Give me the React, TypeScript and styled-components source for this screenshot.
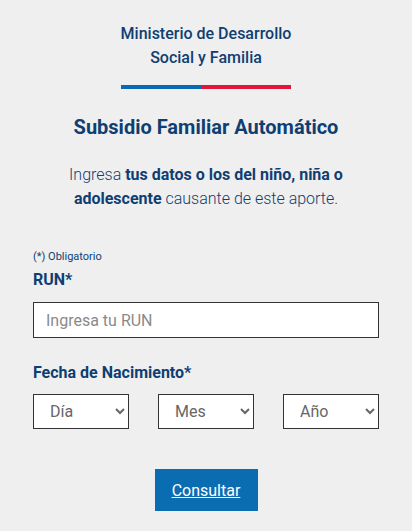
import React from "react";
import styled, {createGlobalStyle} from "styled-components";

const navy = "#0f3e72";

const GlobalStyle = createGlobalStyle`
  html, body {
    margin: 0;
    padding: 0;
    background: #efefef;
    font-family: Roboto, "Liberation Sans", sans-serif;
  }
`;

const Page = styled.div`
  display: flex;
  flex-direction: column;
  align-items: center;
  padding: 22px 33px 20px;
`;

const Ministry = styled.div`
  color: ${navy};
  font-size: 16px;
  font-weight: 500;
  line-height: 24px;
  text-align: center;
`;

const FlagBar = styled.div`
  display: flex;
  width: 170px;
  height: 4px;
  margin-top: 15px;
`;

const Stripe = styled.div<{color: string; size: number}>`
  width: ${p => p.size}px;
  background: ${p => p.color};
`;

const Title = styled.h1`
  margin: 25px 0 0;
  color: ${navy};
  font-size: 20px;
  font-weight: 700;
  line-height: 26px;
  text-align: center;
`;

const Intro = styled.p`
  margin: 23px 0 0;
  color: ${navy};
  font-size: 16px;
  font-weight: 300;
  line-height: 24px;
  text-align: center;

  strong {
    font-weight: 700;
  }
`;

const Form = styled.form`
  align-self: stretch;
  display: flex;
  flex-direction: column;
  margin-top: 39px;
`;

const Note = styled.div`
  color: ${navy};
  font-size: 11px;
  line-height: 14px;
`;

const Label = styled.label<{top: number}>`
  margin-top: ${p => p.top}px;
  color: ${navy};
  font-size: 16px;
  font-weight: 700;
  line-height: 22px;
`;

const TextInput = styled.input`
  box-sizing: border-box;
  height: 36px;
  margin-top: 11px;
  padding: 0 12px;
  border: 1px solid #333;
  border-radius: 0;
  background: #fff;
  font-family: inherit;
  font-size: 16px;
  color: #333;
  outline: none;

  &::placeholder {
    color: #8a8a8a;
  }
`;

const SelectRow = styled.div`
  display: grid;
  grid-template-columns: repeat(3, 96px);
  justify-content: space-between;
  margin-top: 10px;
`;

const Select = styled.select`
  box-sizing: border-box;
  height: 35px;
  padding: 0 8px 0 12px;
  border: 1px solid #333;
  border-radius: 0;
  background: #fff;
  font-family: inherit;
  font-size: 16px;
  color: #666;
  outline: none;
`;

const ButtonRow = styled.div`
  display: flex;
  justify-content: center;
  margin-top: 40px;
`;

const Button = styled.button`
  width: 103px;
  height: 42px;
  border: none;
  border-radius: 0;
  background: #0a6db1;
  color: #fff;
  font-family: inherit;
  font-size: 16px;
  text-decoration: underline;
  cursor: pointer;
`;

export default function App() {
    return (
        <Page>
            <GlobalStyle/>
            <Ministry>Ministerio de Desarrollo<br/>Social y Familia</Ministry>
            <FlagBar>
                <Stripe color="#0a69b1" size={80}/>
                <Stripe color="#e3163a" size={90}/>
            </FlagBar>
            <Title>Subsidio Familiar Automático</Title>
            <Intro>
                Ingresa <strong>tus datos o los del niño, niña o</strong><br/>
                <strong>adolescente</strong> causante de este aporte.
            </Intro>
            <Form onSubmit={e => e.preventDefault()}>
                <Note>(*) Obligatorio</Note>
                <Label top={5}>RUN*</Label>
                <TextInput placeholder="Ingresa tu RUN"/>
                <Label top={24}>Fecha de Nacimiento*</Label>
                <SelectRow>
                    <Select defaultValue=""><option value="">Día</option></Select>
                    <Select defaultValue=""><option value="">Mes</option></Select>
                    <Select defaultValue=""><option value="">Año</option></Select>
                </SelectRow>
                <ButtonRow>
                    <Button type="submit">Consultar</Button>
                </ButtonRow>
            </Form>
        </Page>
    );
}
